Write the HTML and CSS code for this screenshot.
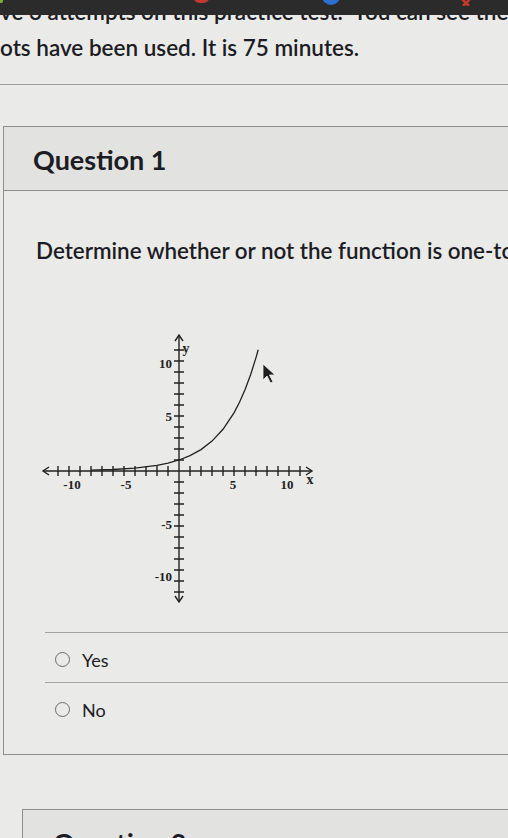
FILE: index.html
```html
<!DOCTYPE html>
<html>
<head>
<meta charset="utf-8">
<link rel="stylesheet" href="styles.css">
</head>
<body>
<div class="topbar">
  <span class="tb tb-green"></span>
  <span class="tb tb-red"></span>
  <span class="tb tb-blue"></span>
  <svg class="tb tb-x" width="14" height="8" viewBox="0 0 14 8"><path d="M2 0L7 5L12 0M4 8L7 5L10 8" stroke="#c53a2e" stroke-width="2.5" fill="none"/></svg>
</div>
<div class="intro">
  <div class="line">ve 3 attempts on this practice test.&nbsp; You can see the</div>
  <div class="line">ots have been used. It is 75 minutes.</div>
</div>
<div class="rule"></div>

<section class="card">
  <header class="card-head"><h2>Question 1</h2></header>
  <div class="card-body">
    <p class="prompt">Determine whether or not the function is one-to-one.</p>
    <svg class="graph" width="290" height="280" viewBox="35 330 290 280" xmlns="http://www.w3.org/2000/svg">
      <g stroke="#222" stroke-width="1.4" fill="none">
        <path d="M43 471H312M179 335V602"/>
        <path d="M49 467L43 471L49 475M306 467L312 471L306 475M175 341L179 335L183 341M175 596L179 602L183 596"/>
        <path d="M58 466V476M69 466V476M80 466V476M91 466V476M102 466V476M113 466V476M124 466V476M135 466V476M146 466V476M157 466V476M168 466V476M190 466V476M201 466V476M212 466V476M223 466V476M234 466V476M245 466V476M256 466V476M267 466V476M278 466V476M289 466V476M300 466V476"/>
        <path d="M174 350H184M174 361H184M174 372H184M174 383H184M174 394H184M174 405H184M174 416H184M174 427H184M174 438H184M174 449H184M174 460H184M174 482H184M174 493H184M174 504H184M174 515H184M174 526H184M174 537H184M174 548H184M174 559H184M174 570H184M174 581H184M174 592H184"/>
        <polyline stroke-width="1.3" points="91,470.2 113,469.5 135,468.1 157,465.4 168,463.1 179,460 190,455.6 201,449.6 212,441.1 223,429.3 234,412.8 239.5,402.2 245,389.7 250.5,375 256,357.6 258.2,349.8"/>
      </g>
      <g class="lbl">
        <text x="72" y="489" text-anchor="middle">-10</text>
        <text x="126" y="489" text-anchor="middle">-5</text>
        <text x="233" y="489" text-anchor="middle">5</text>
        <text x="287" y="489" text-anchor="middle">10</text>
        <text x="310" y="484" text-anchor="middle" class="var">x</text>
        <text x="172" y="368" text-anchor="end">10</text>
        <text x="172" y="421" text-anchor="end">5</text>
        <text x="172" y="529" text-anchor="end">-5</text>
        <text x="172" y="581" text-anchor="end">-10</text>
        <text x="186" y="353" text-anchor="middle" class="var">y</text>
      </g>
      <path d="M263 364L263 380L267 376L270.5 383L273 382L269.5 375L275 375Z" fill="#1e1e1e" stroke="#f0f0f0" stroke-width="0.8"/>
    </svg>
    <ul class="answers">
      <li class="answer"><span class="radio"></span><span class="answer-text">Yes</span></li>
      <li class="answer"><span class="radio"></span><span class="answer-text">No</span></li>
    </ul>
  </div>
</section>

<section class="card card-next">
  <header class="card-head"><h2>Question 2</h2></header>
</section>
</body>
</html>
```
FILE: styles.css
```css
html, body {
  margin: 0;
  padding: 0;
}
body {
  width: 508px;
  height: 838px;
  overflow: hidden;
  background: #eaeae8;
  font-family: Lato, "Open Sans", sans-serif;
  color: #1c1c24;
  position: relative;
}
.topbar {
  position: absolute;
  left: 0;
  top: 0;
  width: 508px;
  height: 15px;
  background: #2b2b2b;
  z-index: 2;
}
.tb {
  position: absolute;
  top: -4px;
  display: block;
}
.tb-green { left: -2px; width: 5px; height: 7px; background: #7fae3a; border-radius: 2px; }
.tb-red { left: 193px; width: 17px; height: 7px; background: #c4392f; border-radius: 0 0 8px 8px; }
.tb-blue { left: 322px; width: 18px; height: 9px; background: #2f6fd1; border-radius: 0 0 9px 9px; }
.tb-x { left: 459px; top: -2px; }

.intro {
  margin-top: -6px;
  font-size: 22.5px;
  line-height: 36px;
  font-weight: 600;
  white-space: nowrap;
  overflow: hidden;
}
.rule {
  margin-top: 18px;
  border-top: 1px solid #a0a09e;
}

.card {
  margin: 41px 0 0 3px;
  border: 1px solid #8e8e8c;
  border-right: none;
}
.card-head {
  height: 64px;
  box-sizing: border-box;
  padding: 4px 0 0 29px;
  display: flex;
  align-items: center;
  background: #e2e2e0;
  border-bottom: 1px solid #8e8e8c;
}
.card-head h2 {
  margin: 0;
  font-size: 27px;
  font-weight: 700;
  line-height: 1.2;
}
.card-body {
  padding-bottom: 22px;
  overflow: hidden;
}
.prompt {
  margin: 47px 0 0 32px;
  font-size: 22.4px;
  line-height: 1.2;
  font-weight: 600;
  white-space: nowrap;
}
.graph {
  display: block;
  margin: 65px 0 0 31px;
}
.lbl text {
  font-family: "Liberation Serif", "DejaVu Serif", serif;
  font-size: 13px;
  font-weight: 700;
  fill: #222;
}
.lbl .var {
  font-size: 14px;
}
.answers {
  list-style: none;
  margin: 22px 0 0 41px;
  padding: 0;
}
.answer {
  height: 50px;
  box-sizing: border-box;
  padding-top: 5px;
  border-top: 1px solid #a3a3a1;
  display: flex;
  align-items: center;
}
.radio {
  width: 13px;
  height: 13px;
  border: 1.6px solid #6a6a6a;
  border-radius: 50%;
  margin-left: 10px;
  margin-right: 12px;
  flex: none;
}
.answer-text {
  font-size: 18px;
}
.card-next {
  margin-top: 54px;
  margin-left: 22px;
}
.card-next .card-head {
  padding-left: 30px;
}
```
